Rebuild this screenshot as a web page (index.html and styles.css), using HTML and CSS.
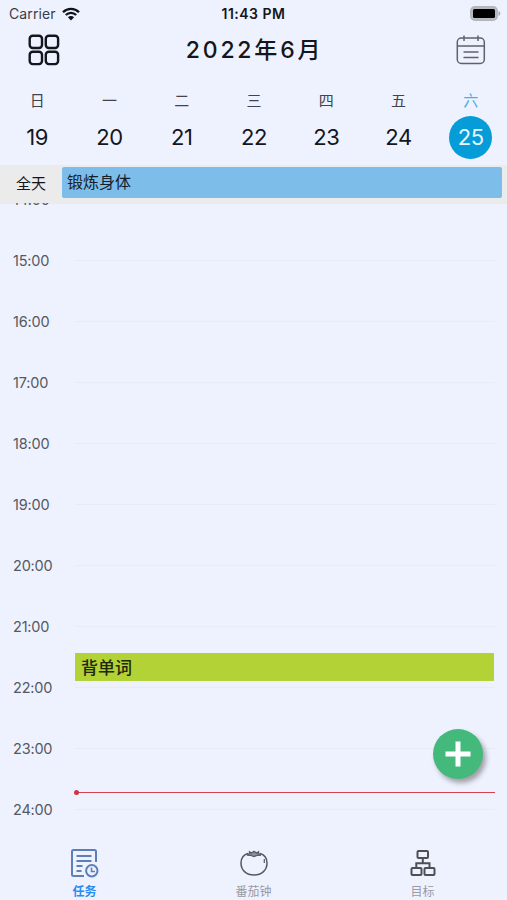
FILE: index.html
```html
<!DOCTYPE html>
<html lang="zh-CN">
<head>
    <meta charset="UTF-8">
    <meta name="viewport" content="width=device-width, initial-scale=1.0">
    <title>任务</title>
    <link rel="stylesheet" href="styles.css">
</head>

<body>
    <div class="status-bar">
        <div class="carrier">
            <span>Carrier</span>
            <svg width="18" height="14" viewBox="0 0 18 14">
                <path d="M1 5.2C5.5 .7 12.5 .7 17 5.2M3.8 8C6.8 5.1 11.2 5.1 14.2 8" fill="none" stroke="#10121a" stroke-width="2.3"/>
                <path d="M9 13.4L5.9 10.2C7.6 8.7 10.4 8.7 12.1 10.2z" fill="#10121a"/>
            </svg>
        </div>
        <div class="clock">11:43 PM</div>
        <svg class="battery" width="31" height="15" viewBox="0 0 31 15">
            <rect x=".8" y=".8" width="26.4" height="13.4" rx="4" fill="#b9bbc3" stroke="#b3b5bd" stroke-width="1.5"/>
            <rect x="3" y="3" width="22" height="9" rx="1.5" fill="#000"/>
            <path d="M28.5 5C31 6 31 9 28.5 10z" fill="#a9abb4"/>
        </svg>
    </div>

    <header>
        <svg width="32" height="32" viewBox="0 0 32 32" fill="none" stroke="#14161d" stroke-width="2.4">
            <rect x="1.7" y="1.7" width="12.3" height="12.3" rx="3"/>
            <rect x="17.8" y="1.7" width="12.3" height="12.3" rx="3"/>
            <rect x="1.7" y="17.8" width="12.3" height="12.3" rx="3"/>
            <rect x="17.8" y="17.8" width="12.3" height="12.3" rx="3"/>
        </svg>
        <h1>2022年6月</h1>
        <svg width="30" height="30" viewBox="0 0 30 30" fill="none" stroke="#5f6268" stroke-width="1.5">
            <rect x="1.3" y="3" width="27" height="25.5" rx="4"/>
            <path d="M1.5 11H28M8 .5V6M22 .5V6M7.5 17H22.5M7.5 22.5H22.5"/>
        </svg>
    </header>

    <div class="week">
        <div class="day"><span>日</span><b>19</b></div>
        <div class="day"><span>一</span><b>20</b></div>
        <div class="day"><span>二</span><b>21</b></div>
        <div class="day"><span>三</span><b>22</b></div>
        <div class="day"><span>四</span><b>23</b></div>
        <div class="day"><span>五</span><b>24</b></div>
        <div class="day selected"><span>六</span><b>25</b></div>
    </div>

    <div class="all-day">
        <div class="all-day-label">全天</div>
        <div class="all-day-event">锻炼身体</div>
    </div>

    <main class="timeline">
        <div class="hours">
            <div class="hour">14:00</div>
            <div class="hour">15:00</div>
            <div class="hour">16:00</div>
            <div class="hour">17:00</div>
            <div class="hour">18:00</div>
            <div class="hour">19:00</div>
            <div class="hour">20:00</div>
            <div class="hour">21:00</div>
            <div class="hour">22:00</div>
            <div class="hour">23:00</div>
            <div class="hour">24:00</div>
        </div>
        <div class="event">背单词</div>
        <div class="now"></div>
        <button class="add-button">
            <svg width="26" height="26" viewBox="0 0 26 26">
                <path d="M13 .5V25.5M.5 13H25.5" stroke="#fff" stroke-width="5"/>
            </svg>
        </button>
    </main>

    <nav class="tabs">
        <div class="tab active">
            <svg width="30" height="30" viewBox="0 0 30 30" fill="none" stroke="#5b80b8" stroke-width="2">
                <path d="M14 28H3.5Q2 28 2 26.5V3.5Q2 2 3.5 2H24.5Q26 2 26 3.5V14M6.5 8H21.5M6.5 13H21.5M6.5 18H12.5M6.5 23H11.5"/>
                <circle cx="21.8" cy="22.8" r="5.7"/>
                <path d="M21.5 19.5V23.5H25" stroke-width="1.6"/>
            </svg>
            <span>任务</span>
        </div>
        <div class="tab">
            <svg width="30" height="30" viewBox="0 0 30 30" fill="none" stroke="#55585f" stroke-width="1.5">
                <path d="M9.5 5.2C4.5 6.5 2 10.5 2 15C2 22 7 27 15 27S28 22 28 15C28 10.5 25.5 6.5 20.5 5.2"/>
                <path d="M15 3.2L12.5 5L10.5 3.7L10.8 6L8 7.2L12 7.5L15 8.5L18 7.5L22 7.2L19.2 6L19.5 3.7L17.5 5zM25.3 11V15" fill="#8b8e96" stroke-width="1.2"/>
            </svg>
            <span>番茄钟</span>
        </div>
        <div class="tab">
            <svg width="30" height="30" viewBox="0 0 30 30" fill="none" stroke="#4d4f55" stroke-width="2">
                <rect x="9.5" y="3" width="10.5" height="7" rx="1"/>
                <rect x="3.5" y="20" width="10" height="7" rx="1"/>
                <rect x="16.5" y="20" width="10" height="7" rx="1"/>
                <path d="M14.8 10V15.3M8.3 20V15.3H21.5V20"/>
            </svg>
            <span>目标</span>
        </div>
    </nav>
</body>
</html>
```
FILE: styles.css
```css
* {
    box-sizing: border-box;
}

body {
    margin: 0;
    height: 900px;
    display: flex;
    flex-direction: column;
    overflow: hidden;
    background-color: #eef2ff;
    color: #14161d;
    font-family: Inter, "Noto Sans CJK SC", sans-serif;
}

svg {
    display: block;
    flex: none;
}

.status-bar {
    display: grid;
    grid-template-columns: 1fr auto 1fr;
    align-items: center;
    height: 27px;
    padding: 0 6px 0 9px;
    font-size: 14px;
}

.carrier {
    display: flex;
    align-items: center;
    gap: 6px;
    color: #3b3d45;
    letter-spacing: 0.1px;
}

.clock {
    font-size: 14px;
    font-weight: 600;
    letter-spacing: 0.5px;
    margin-right: 3px;
}

.battery {
    justify-self: end;
}

header {
    display: flex;
    justify-content: space-between;
    align-items: center;
    height: 45px;
    padding: 1px 21px 0 28px;
}

h1 {
    margin: 0 7px 0 0;
    font-size: 23px;
    font-weight: 500;
    line-height: 45px;
    letter-spacing: 2.8px;
}

.week {
    display: flex;
    height: 93px;
    padding: 17px 0 0 1px;
}

.day {
    flex: 1;
    display: flex;
    flex-direction: column;
    align-items: center;
    color: #42444c;
}

.day span {
    font-size: 15px;
    line-height: 24px;
}

.day b {
    width: 43px;
    height: 43px;
    margin-top: 3px;
    border-radius: 50%;
    color: #14161d;
    font-size: 22px;
    font-weight: normal;
    line-height: 43px;
    letter-spacing: -0.4px;
    text-align: center;
}

.day.selected {
    color: #4aaee6;
}

.day.selected b {
    background-color: #059cd8;
    color: #e8f7ff;
}

.all-day {
    display: flex;
    height: 38px;
    padding: 2px 5px 5px 0;
    background-color: #ebebeb;
    font-size: 15px;
}

.all-day-label {
    width: 62px;
    line-height: 33px;
    text-align: center;
}

.all-day-event {
    flex: 1;
    padding-left: 5px;
    border-radius: 2px;
    background-color: #7cbde9;
    color: #15202d;
    font-size: 16px;
    line-height: 31px;
}

/* the grey of the all-day row runs on for 1px under the scrolled hours */
.timeline {
    position: relative;
    height: 632px;
    overflow: hidden;
    background: linear-gradient(#ebebeb, #ebebeb) no-repeat 0 0 / 100% 1px;
}

.hours {
    margin-top: -34px;
}

.hour {
    display: grid;
    grid-template-columns: 62px 1fr;
    align-items: center;
    height: 61px;
    padding: 0 12px 0 13px;
    color: #55585f;
    font-size: 14.5px;
    letter-spacing: -0.2px;
}

.hour::after {
    content: "";
    height: 1px;
    background-color: #e7ebf5;
}

/* events lie over the hour grid */
.event {
    position: absolute;
    top: 450px;
    left: 75px;
    right: 13px;
    height: 28px;
    padding-left: 6px;
    background-color: #b2d235;
    color: #20270c;
    font-size: 17px;
    font-weight: 500;
    line-height: 30px;
}

.now {
    position: absolute;
    top: 589px;
    left: 75px;
    right: 12px;
    height: 1px;
    background-color: #d84052;
}

.now::before {
    content: "";
    position: absolute;
    top: -2px;
    left: -1px;
    width: 5px;
    height: 5px;
    border-radius: 50%;
    background-color: #cf3440;
}

.add-button {
    position: absolute;
    top: 526px;
    right: 24px;
    width: 50px;
    height: 50px;
    display: flex;
    justify-content: center;
    align-items: center;
    padding: 0;
    border: none;
    border-radius: 50%;
    background-color: #43ba7c;
    box-shadow: 3px 4px 5px rgba(70, 60, 60, 0.45);
}

.tabs {
    display: flex;
    flex: 1;
    padding-top: 13px;
}

.tab {
    flex: 1;
    display: flex;
    flex-direction: column;
    align-items: center;
    color: #989ba3;
    font-size: 12px;
    line-height: 16px;
}

.tab span {
    margin-top: 6px;
}

.tab.active {
    color: #278bf0;
    font-weight: 600;
}
```
